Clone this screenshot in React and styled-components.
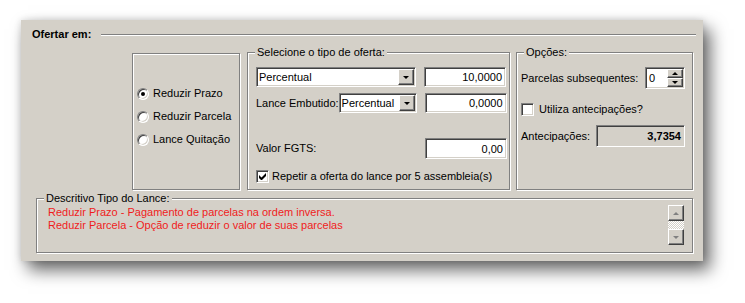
import React from 'react';
import styled, { createGlobalStyle } from 'styled-components';

const GlobalStyle = createGlobalStyle`
  html, body {
    margin: 0;
    padding: 0;
    background: #ffffff;
  }
  body {
    font-family: 'Liberation Sans', Arial, sans-serif;
    font-size: 11px;
    color: #000;
  }
  * {
    box-sizing: border-box;
  }
`;

const face = '#d4d0c8';

const Page = styled.div`
  padding: 20px 0 0 21px;
  height: 303px;
`;

const Panel = styled.div`
  width: 682px;
  height: 241px;
  background: ${face};
  padding: 8px 0 0 11px;
  box-shadow: 7px 9px 16px rgba(0, 0, 0, 0.6), 0 0 7px rgba(0, 0, 0, 0.14);
`;

const Header = styled.div`
  display: flex;
  align-items: center;
  height: 13px;
  padding-right: 7px;
`;

const HeaderTitle = styled.span`
  font-weight: bold;
  line-height: 13px;
`;

const HeaderLine = styled.div`
  flex: 1;
  height: 2px;
  margin-left: 10px;
  margin-top: 1px;
  border-top: 1px solid #808080;
  border-bottom: 1px solid #ffffff;
`;

const GroupRow = styled.div`
  display: flex;
  align-items: flex-start;
  margin-top: 5px;
  padding-left: 100px;
`;

const GroupBox = styled.fieldset`
  margin: 0;
  margin-left: ${({ $gap }) => $gap || 0}px;
  margin-top: ${({ $top }) => $top || 0}px;
  padding: 0;
  min-width: 0;
  width: ${({ $w }) => $w}px;
  height: ${({ $h }) => $h}px;
  border: 1px solid #808080;
  box-shadow: inset 1px 1px 0 #ffffff, 1px 1px 0 #ffffff;
`;

const Legend = styled.legend`
  margin-left: 7px;
  padding: 0 2px;
  line-height: 13px;
  background: ${face};
`;

const RadioList = styled.div`
  display: flex;
  flex-direction: column;
  gap: 10px;
  padding: 33px 0 0 4px;
`;

const RadioRow = styled.label`
  display: flex;
  align-items: center;
  gap: 4px;
  height: 13px;
  line-height: 13px;
  white-space: nowrap;
`;

const RadioDot = styled.span`
  position: relative;
  width: 12px;
  height: 12px;
  border-radius: 50%;
  background: #fff;
  border: 1px solid;
  border-color: #808080 #ffffff #ffffff #808080;
  box-shadow: inset 1px 1px 0 #404040, inset -1px -1px 0 ${face};

  &::after {
    content: '';
    display: ${({ $checked }) => ($checked ? 'block' : 'none')};
    position: absolute;
    left: 3px;
    top: 3px;
    width: 4px;
    height: 4px;
    border-radius: 50%;
    background: #000;
  }
`;

const Content = styled.div`
  padding: ${({ $pad }) => $pad};
`;

const Row = styled.div`
  display: flex;
  align-items: center;
  margin-top: ${({ $mt }) => $mt || 0}px;
  gap: ${({ $gap }) => $gap || 0}px;
`;

const Label = styled.span`
  flex: ${({ $w }) => ($w ? `0 0 ${$w}px` : 1)};
  line-height: 13px;
  white-space: nowrap;
`;

const Sunken = styled.div`
  display: flex;
  align-items: center;
  width: ${({ $w }) => $w}px;
  height: ${({ $h }) => $h || 20}px;
  margin-left: ${({ $ml }) => $ml || 0}px;
  background: ${({ $readonly }) => ($readonly ? face : '#fff')};
  border: 1px solid;
  border-color: #808080 #ffffff #ffffff #808080;
  box-shadow: inset 1px 1px 0 #404040, inset -1px -1px 0 ${face};
  padding: 1px;
`;

const FieldText = styled.span`
  flex: 1;
  padding: ${({ $right, $pl }) => ($right ? '0 2px 0 0' : `0 0 0 ${$pl || 1}px`)};
  text-align: ${({ $right }) => ($right ? 'right' : 'left')};
  font-weight: ${({ $bold }) => ($bold ? 'bold' : 'normal')};
  white-space: nowrap;
  overflow: hidden;
`;

const RaisedButton = styled.div`
  display: flex;
  align-items: center;
  justify-content: center;
  width: ${({ $w }) => $w || 16}px;
  height: ${({ $h }) => $h || 16}px;
  background: ${face};
  border: 1px solid;
  border-color: #ffffff #404040 #404040 #ffffff;
  box-shadow: inset -1px -1px 0 #808080, inset 1px 1px 0 ${face};
`;

const Arrow = styled.span`
  width: 0;
  height: 0;
  border-left: ${({ $size }) => $size}px solid transparent;
  border-right: ${({ $size }) => $size}px solid transparent;
  ${({ $up, $size, $color }) =>
    $up
      ? `border-bottom: ${$size}px solid ${$color};`
      : `border-top: ${$size}px solid ${$color};`}
`;

const SpinButtons = styled.div`
  display: flex;
  flex-direction: column;
  align-self: stretch;
`;

const CheckRow = styled.label`
  display: flex;
  align-items: center;
  gap: ${({ $gap }) => $gap}px;
  line-height: 13px;
  white-space: nowrap;
`;

const CheckBox = styled.span`
  display: flex;
  align-items: center;
  justify-content: center;
  width: 13px;
  height: 13px;
  background: #fff;
  border: 1px solid;
  border-color: #808080 #ffffff #ffffff #808080;
  box-shadow: inset 1px 1px 0 #404040, inset -1px -1px 0 ${face};
`;

const DescBox = styled(GroupBox)`
  margin-left: 4px;
`;

const DescBody = styled.div`
  display: flex;
  padding: 0 8px 0 11px;
`;

const DescText = styled.div`
  flex: 1;
  padding-top: 1px;
  color: #f01c1c;
  line-height: 13px;
`;

const ScrollBar = styled.div`
  display: flex;
  flex-direction: column;
  width: 16px;
`;

const ScrollTrack = styled.div`
  height: 8px;
  background: repeating-conic-gradient(#ffffff 0 25%, ${face} 0 50%) 0 0 / 2px 2px;
`;

function Combo({ width, text }) {
  return (
    <Sunken $w={width}>
      <FieldText>{text}</FieldText>
      <RaisedButton $w={16} $h={16}>
        <Arrow $size={3.5} $color="#000" />
      </RaisedButton>
    </Sunken>
  );
}

function Check({ checked, gap, children }) {
  return (
    <CheckRow $gap={gap}>
      <CheckBox>
        {checked && (
          <svg width="7" height="7" viewBox="0 0 7 7">
            <path d="M0 2v3l2 2h1l4-4V0L2.5 4.5z" fill="#000" />
          </svg>
        )}
      </CheckBox>
      {children}
    </CheckRow>
  );
}

export default function App() {
  return (
    <Page>
      <GlobalStyle />
      <Panel>
        <Header>
          <HeaderTitle>Ofertar em:</HeaderTitle>
          <HeaderLine />
        </Header>

        <GroupRow>
          <GroupBox $w={108} $h={137} $top={7}>
            <RadioList>
              <RadioRow><RadioDot $checked />Reduzir Prazo</RadioRow>
              <RadioRow><RadioDot />Reduzir Parcela</RadioRow>
              <RadioRow><RadioDot />Lance Quitação</RadioRow>
            </RadioList>
          </GroupBox>

          <GroupBox $w={263} $h={144} $gap={7}>
            <Legend>Selecione o tipo de oferta:</Legend>
            <Content $pad="8px 2px 0 8px">
              <Row $gap={8}>
                <Combo width={160} text="Percentual" />
                <Sunken $w={82}><FieldText $right>10,0000</FieldText></Sunken>
              </Row>
              <Row $mt={6}>
                <Label $w={82}>Lance Embutido:</Label>
                <Combo width={78} text="Percentual" />
                <Sunken $w={82} $ml={8}><FieldText $right>0,0000</FieldText></Sunken>
              </Row>
              <Row $mt={25}>
                <Label>Valor FGTS:</Label>
                <Sunken $w={82} $h={21}><FieldText $right>0,00</FieldText></Sunken>
              </Row>
              <Row $mt={11}>
                <Check checked gap={3}>Repetir a oferta do lance por 5 assembleia(s)</Check>
              </Row>
            </Content>
          </GroupBox>

          <GroupBox $w={177} $h={144} $gap={6}>
            <Legend>Opções:</Legend>
            <Content $pad="8px 7px 0 4px">
              <Row>
                <Label>Parcelas subsequentes:</Label>
                <Sunken $w={40} $h={22}>
                  <FieldText $pl={2}>0</FieldText>
                  <SpinButtons>
                    <RaisedButton $w={16} $h={9}>
                      <Arrow $up $size={3} $color="#000" />
                    </RaisedButton>
                    <RaisedButton $w={16} $h={9}>
                      <Arrow $size={3} $color="#000" />
                    </RaisedButton>
                  </SpinButtons>
                </Sunken>
              </Row>
              <Row $mt={14}>
                <Check gap={5}>Utiliza antecipações?</Check>
              </Row>
              <Row $mt={9}>
                <Label>Antecipações:</Label>
                <Sunken $w={89} $h={22} $readonly>
                  <FieldText $right $bold>3,7354</FieldText>
                </Sunken>
              </Row>
            </Content>
          </GroupBox>
        </GroupRow>

        <DescBox $w={657} $h={61} $top={2}>
          <Legend>Descritivo Tipo do Lance:</Legend>
          <DescBody>
            <DescText>
              <div>Reduzir Prazo - Pagamento de parcelas na ordem inversa.</div>
              <div>Reduzir Parcela - Opção de reduzir o valor de suas parcelas</div>
            </DescText>
            <ScrollBar>
              <RaisedButton>
                <Arrow $up $size={3.5} $color="#808080" />
              </RaisedButton>
              <ScrollTrack />
              <RaisedButton>
                <Arrow $size={3.5} $color="#808080" />
              </RaisedButton>
            </ScrollBar>
          </DescBody>
        </DescBox>
      </Panel>
    </Page>
  );
}
